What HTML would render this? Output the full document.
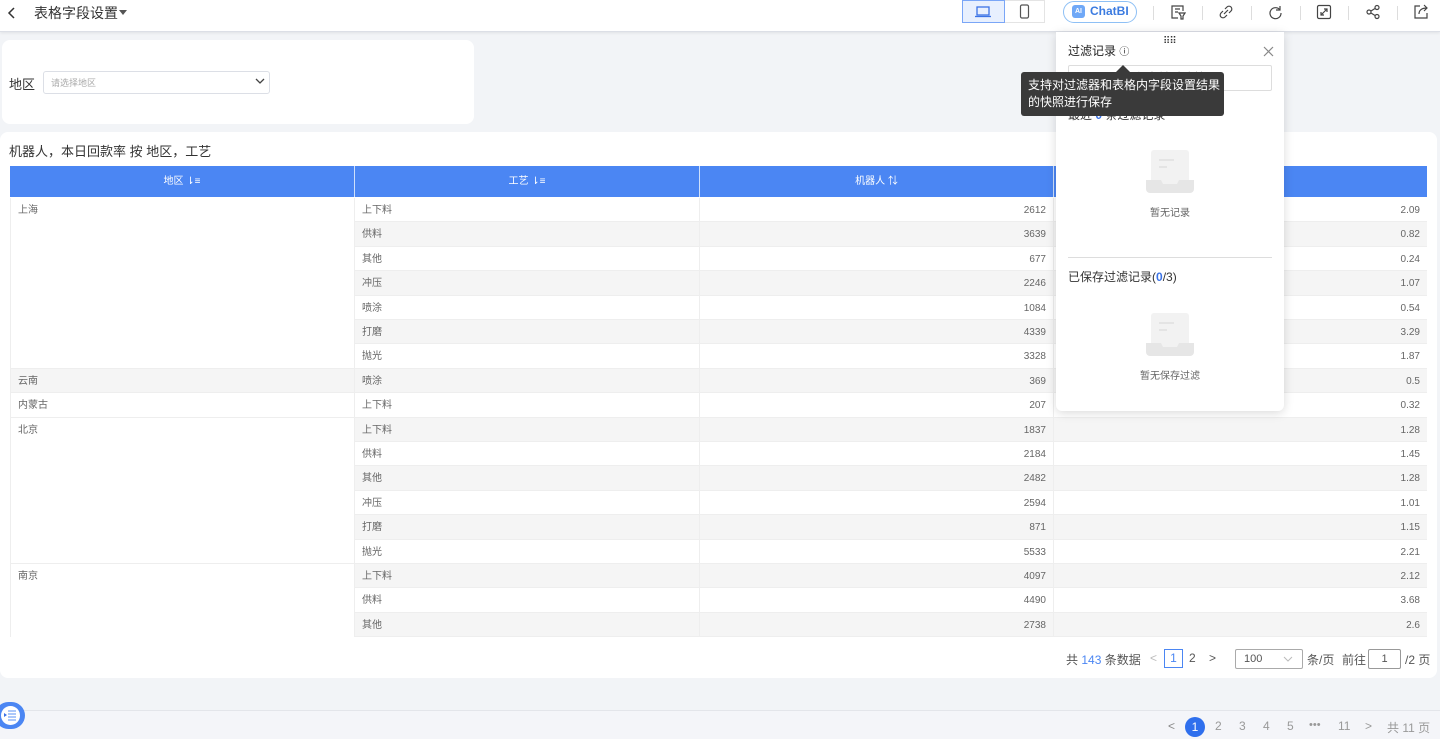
<!DOCTYPE html>
<html><head><meta charset="utf-8"><style>
*{box-sizing:border-box;margin:0;padding:0}
body{width:1440px;height:739px;overflow:hidden;background:#f2f4f7;font-family:"Liberation Sans","Noto Sans CJK SC",sans-serif;position:relative;color:#333}
.a{position:absolute}
.top{left:0;top:0;width:1440px;height:32px;background:#fff;border-bottom:1px solid #dcdfe6;box-shadow:0 1px 3px rgba(0,0,0,.08)}
.ic{position:absolute;top:4px}
.sep{position:absolute;top:6px;width:1px;height:14px;background:#ddd}
.card{background:#fff;border-radius:8px}
.hd{top:166px;height:31px;background:#4b86f3;color:#fff;font-size:10px;line-height:31px;text-align:center;border-right:1px solid #cfe0fb}
.row{position:absolute;height:24.4px;font-size:10px;color:#666;line-height:25px;border-bottom:1px solid #eee}
.g{background:#f5f5f5}
.num{text-align:right;padding-right:7px}
</style></head><body>
<div class="a top">
 <svg class="a" style="left:7px;top:6px" width="10" height="14" viewBox="0 0 10 14"><path d="M7 2L2 7l5 5" fill="none" stroke="#333" stroke-width="1.5"/></svg>
 <div class="a" style="left:34px;top:3px;font-size:14px;color:#333">表格字段设置</div>
 <div class="a" style="left:119px;top:10px;width:0;height:0;border-left:4px solid transparent;border-right:4px solid transparent;border-top:5px solid #555"></div>
 <div class="a" style="left:962px;top:0;width:43px;height:23px;background:#e8f0fe;border:1px solid #7aa6f7"></div>
 <svg class="a" style="left:975px;top:6px" width="16" height="12" viewBox="0 0 16 12"><rect x="2" y="1" width="12" height="8" fill="none" stroke="#3b73e6" stroke-width="1.3"/><path d="M0 10.5h16" stroke="#3b73e6" stroke-width="1.3"/></svg>
 <div class="a" style="left:1005px;top:0;width:40px;height:23px;border:1px solid #e4e4e4;border-left:none"></div>
 <svg class="a" style="left:1019px;top:4px" width="12" height="16" viewBox="0 0 12 16"><rect x="1.5" y="1" width="8" height="13" rx="1.5" fill="none" stroke="#555" stroke-width="1.2"/></svg>
 <div class="a" style="left:1063px;top:1px;width:74px;height:22px;border:1px solid #8ec0f5;border-radius:12px"></div>
 <div class="a" style="left:1072px;top:5px;width:13px;height:13px;border-radius:3px;background:#6fa8f7;color:#fff;font-size:7px;line-height:13px;text-align:center;font-weight:bold">AI</div>
 <div class="a" style="left:1090px;top:4px;font-size:12px;font-weight:bold;color:#3b7be0">ChatBI</div>
 <div class="sep" style="left:1153px"></div><div class="sep" style="left:1202px"></div><div class="sep" style="left:1251px"></div><div class="sep" style="left:1300px"></div><div class="sep" style="left:1348px"></div><div class="sep" style="left:1397px"></div>
 <svg class="ic" style="left:1170px" width="16" height="16" viewBox="0 0 16 16" fill="none" stroke="#444" stroke-width="1.2"><path d="M13 7V2H2v12h6"/><path d="M5 5h5M5 8h3"/><path d="M9 9h6l-2 3v3h-2v-3z"/></svg>
 <svg class="ic" style="left:1218px" width="16" height="16" viewBox="0 0 16 16" fill="none" stroke="#444" stroke-width="1.2"><path d="M7 5l2-2a2.5 2.5 0 014 4l-2 2M9 11l-2 2a2.5 2.5 0 01-4-4l2-2M6 10l4-4"/></svg>
 <svg class="ic" style="left:1267px" width="16" height="16" viewBox="0 0 16 16" fill="none" stroke="#444" stroke-width="1.2"><path d="M13 6A5.5 5.5 0 1014 9"/><path d="M13 2v4H9"/></svg>
 <svg class="ic" style="left:1316px" width="16" height="16" viewBox="0 0 16 16" fill="none" stroke="#444" stroke-width="1.2"><rect x="1.5" y="1.5" width="13" height="13" rx="1.5"/><path d="M5 11l6-6M5 8v3h3M11 8V5H8"/></svg>
 <svg class="ic" style="left:1365px" width="16" height="16" viewBox="0 0 16 16" fill="none" stroke="#444" stroke-width="1.2"><circle cx="4" cy="8" r="2"/><circle cx="12" cy="3.5" r="2"/><circle cx="12" cy="12.5" r="2"/><path d="M6 7l4-2.5M6 9l4 2.5"/></svg>
 <svg class="ic" style="left:1413px" width="16" height="16" viewBox="0 0 16 16" fill="none" stroke="#444" stroke-width="1.2"><path d="M7 2H2v12h12V9"/><path d="M6 10c0-4 3-6 8-6M11 1l3 3-3 3"/></svg>
</div>

<div class="a card" style="left:2px;top:40px;width:472px;height:84px"></div>
<div class="a" style="left:9px;top:74px;font-size:13px;color:#333">地区</div>
<div class="a" style="left:43px;top:71px;width:227px;height:23px;border:1px solid #dcdfe6;border-radius:3px;background:#fff"></div>
<div class="a" style="left:51px;top:76px;font-size:9px;color:#aaa">请选择地区</div>
<svg class="a" style="left:255px;top:78px" width="10" height="7" viewBox="0 0 10 7"><path d="M1 1l4 4 4-4" fill="none" stroke="#444" stroke-width="1.3"/></svg>

<div class="a card" style="left:0;top:132px;width:1437px;height:546px"></div>
<div class="a" style="left:9px;top:141px;font-size:13px;color:#333">机器人，本日回款率 按 地区，工艺</div>

<div class="a hd" style="left:10px;width:345px">地区 ⇂≡</div>
<div class="a hd" style="left:355px;width:345px">工艺 ⇂≡</div>
<div class="a hd" style="left:700px;width:354px">机器人 ⇅</div>
<div class="a hd" style="left:1054px;width:373px;border-right:none"></div>

<div class="a" style="left:10px;top:198px;width:1417px;height:439px;overflow:hidden;background:#fff" id="tb">
<script>
var d=[["上海","上下料",2612,"2.09"],["","供料",3639,"0.82"],["","其他",677,"0.24"],["","冲压",2246,"1.07"],["","喷涂",1084,"0.54"],["","打磨",4339,"3.29"],["","抛光",3328,"1.87"],["云南","喷涂",369,"0.5"],["内蒙古","上下料",207,"0.32"],["北京","上下料",1837,"1.28"],["","供料",2184,"1.45"],["","其他",2482,"1.28"],["","冲压",2594,"1.01"],["","打磨",871,"1.15"],["","抛光",5533,"2.21"],["南京","上下料",4097,"2.12"],["","供料",4490,"3.68"],["","其他",2738,"2.6"],["","冲压",1500,"1.1"]];
var h="",H=24.4,spans={0:7,7:1,8:1,9:6,15:5};
for(var i=0;i<d.length;i++){var y=i*H,g=i%2?" g":"";
h+='<div class="row'+g+'" style="left:345px;top:'+y+'px;width:345px;padding-left:7px;border-right:1px solid #eee">'+d[i][1]+'</div>';
h+='<div class="row num'+g+'" style="left:690px;top:'+y+'px;width:354px;border-right:1px solid #eee">'+d[i][2]+'</div>';
h+='<div class="row num'+g+'" style="left:1044px;top:'+y+'px;width:373px">'+d[i][3]+'</div>';
if(spans[i]){var s=spans[i],gg=(s==1&&i%2)?" g":"";h+='<div class="row'+gg+'" style="left:0;top:'+y+'px;width:345px;height:'+(s*H)+'px;padding-left:7px;border-right:1px solid #eee;border-left:1px solid #eee">'+d[i][0]+'</div>';}}
document.getElementById("tb").innerHTML=h;
</script>
</div>

<div class="a" style="left:1066px;top:651px;font-size:12px;color:#555">共 <span style="color:#4b86f3">143</span> 条数据</div>
<div class="a" style="left:1150px;top:651px;font-size:12px;color:#bbb">&lt;</div>
<div class="a" style="left:1164px;top:649px;width:19px;height:19px;border:1px solid #4b86f3;color:#4b86f3;font-size:12px;text-align:center;line-height:17px">1</div>
<div class="a" style="left:1189px;top:651px;font-size:12px;color:#555">2</div>
<div class="a" style="left:1209px;top:651px;font-size:12px;color:#555">&gt;</div>
<div class="a" style="left:1235px;top:649px;width:68px;height:20px;border:1px solid #aaa;border-radius:2px;font-size:11px;color:#555;padding:3px 8px">100</div>
<svg class="a" style="left:1283px;top:656px" width="10" height="6" viewBox="0 0 10 6"><path d="M1 1l4 4 4-4" fill="none" stroke="#bbb"/></svg>
<div class="a" style="left:1307px;top:651px;font-size:12px;color:#555">条/页</div>
<div class="a" style="left:1342px;top:651px;font-size:12px;color:#555">前往</div>
<div class="a" style="left:1368px;top:649px;width:33px;height:20px;border:1px solid #999;border-radius:2px;font-size:11px;color:#555;text-align:center;line-height:18px">1</div>
<div class="a" style="left:1405px;top:651px;font-size:12px;color:#555">/2 页</div>

<div class="a" style="left:0;top:710px;width:1440px;height:29px;background:#f4f5f9;border-top:1px solid #e3e5ea"></div>
<div class="a" style="left:-5px;top:702px;width:30px;height:27px;border-radius:14px;background:#4b86f3"></div>
<div class="a" style="left:1px;top:706px;width:19px;height:19px;border-radius:50%;background:#fff"></div>
<svg class="a" style="left:3px;top:710px" width="14" height="11" viewBox="0 0 14 11"><path d="M5 1h8M5 4h8M5 7h8M5 10h8" stroke="#7aa6f7" stroke-width="1.2"/><path d="M1 3l3 2-3 2z" fill="#3b73e6"/></svg>
<div class="a" style="left:1168px;top:719px;font-size:12px;color:#888">&lt;</div>
<div class="a" style="left:1185px;top:717px;width:20px;height:20px;border-radius:50%;background:#2f6fed;color:#fff;font-size:12px;text-align:center;line-height:20px">1</div>
<div class="a" style="left:1215px;top:719px;font-size:12px;color:#999;word-spacing:14px">2 3 4 5</div>
<div class="a" style="left:1309px;top:719px;font-size:11px;color:#999">•••</div>
<div class="a" style="left:1338px;top:719px;font-size:12px;color:#999">11</div>
<div class="a" style="left:1365px;top:719px;font-size:12px;color:#999">&gt;</div>
<div class="a" style="left:1387px;top:719px;font-size:12px;color:#999">共 11 页</div>

<div class="a" style="left:1056px;top:32px;width:228px;height:379px;background:#fff;border-radius:0 0 6px 6px;box-shadow:0 2px 10px rgba(0,0,0,.15)"></div>
<div class="a" style="left:1163px;top:36px;font-size:10px;color:#333;letter-spacing:-1px">⠿⠿</div>
<div class="a" style="left:1068px;top:42px;font-size:12px;color:#222">过滤记录 <span style="font-size:10px">ⓘ</span></div>
<svg class="a" style="left:1263px;top:46px" width="11" height="11" viewBox="0 0 11 11"><path d="M1 1l9 9M10 1l-9 9" stroke="#888" stroke-width="1.2"/></svg>
<div class="a" style="left:1068px;top:65px;width:204px;height:26px;border:1px solid #ddd;border-radius:2px;text-align:center;font-size:12px;color:#555;line-height:24px">保存当前过滤快照</div>
<div class="a" style="left:1068px;top:106px;font-size:12px;color:#333">最近 <span style="color:#3b73e6;font-weight:bold">0</span> 条过滤记录</div>
<div class="a" style="left:1021px;top:72px;width:203px;height:44px;background:#3a3a3a;border-radius:3px;color:#fff;font-size:12px;line-height:17px;padding:5px 7px;white-space:nowrap">支持对过滤器和表格内字段设置结果<br>的快照进行保存</div>
<div class="a" style="left:1116px;top:65px;width:0;height:0;border-left:7px solid transparent;border-right:7px solid transparent;border-bottom:7px solid #3a3a3a"></div>
<svg class="a" style="left:1146px;top:150px" width="48" height="44" viewBox="0 0 48 44"><rect x="5" y="0" width="38" height="36" rx="3" fill="#f2f2f2"/><path d="M13 10h15M13 17h8" stroke="#e0e0e0" stroke-width="1.5"/><path d="M0 30h15l2 4h14l2-4h15v9a4 4 0 01-4 4H4a4 4 0 01-4-4z" fill="#e6e6e6"/></svg>
<div class="a" style="left:1150px;top:204px;font-size:10px;color:#666">暂无记录</div>
<div class="a" style="left:1068px;top:257px;width:204px;height:1px;background:#ddd"></div>
<div class="a" style="left:1068px;top:268px;font-size:12px;color:#333">已保存过滤记录(<span style="color:#3b73e6;font-weight:bold">0</span>/3)</div>
<svg class="a" style="left:1146px;top:313px" width="48" height="44" viewBox="0 0 48 44"><rect x="5" y="0" width="38" height="36" rx="3" fill="#f2f2f2"/><path d="M13 10h15M13 17h8" stroke="#e0e0e0" stroke-width="1.5"/><path d="M0 30h15l2 4h14l2-4h15v9a4 4 0 01-4 4H4a4 4 0 01-4-4z" fill="#e6e6e6"/></svg>
<div class="a" style="left:1140px;top:367px;font-size:10px;color:#666">暂无保存过滤</div>
</body></html>
